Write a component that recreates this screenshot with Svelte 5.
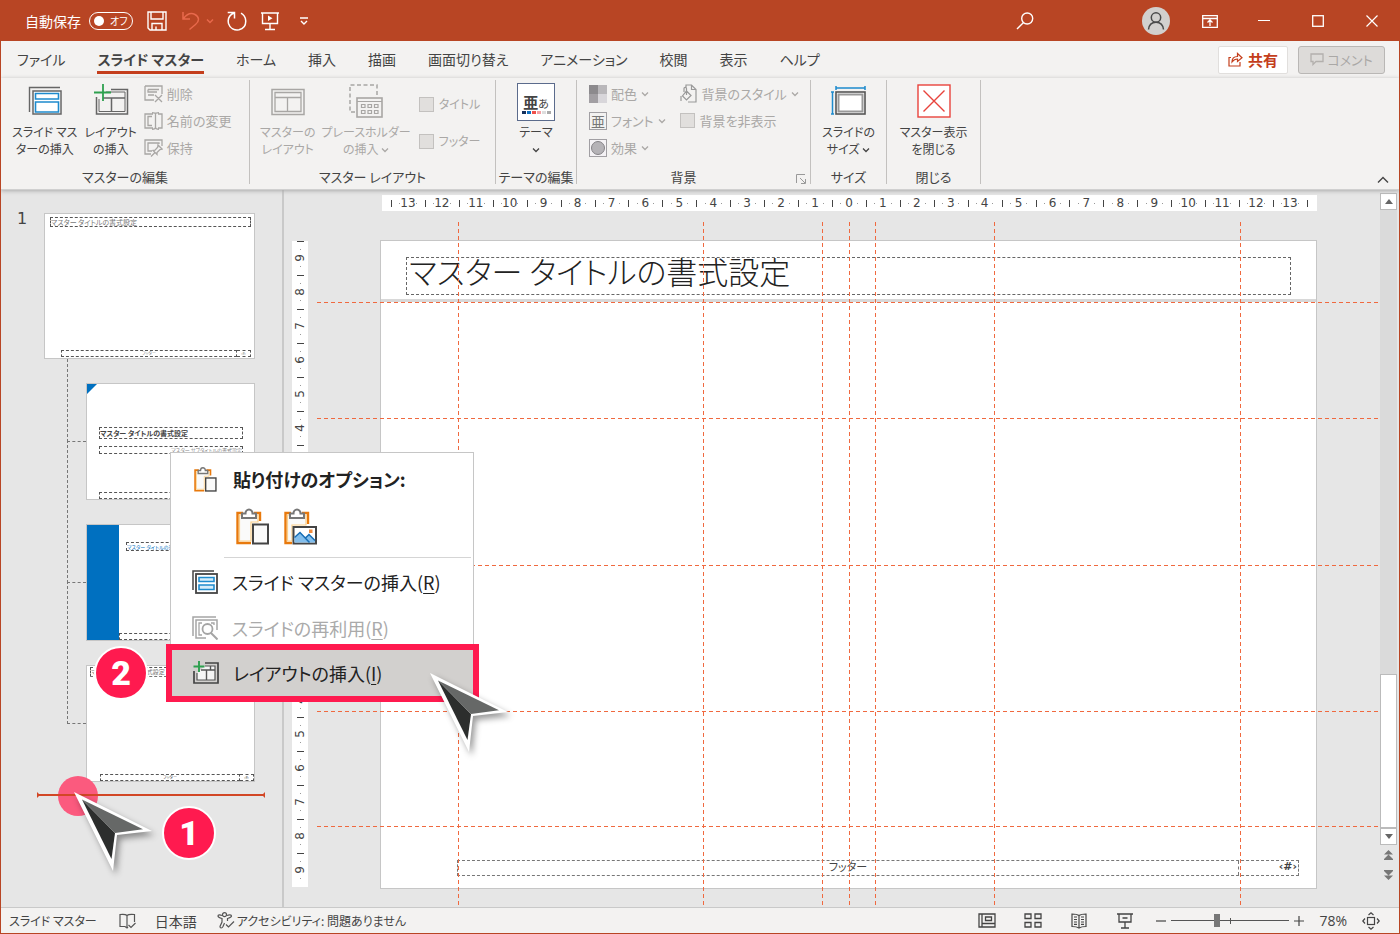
<script>
  const tabs = ['ファイル', 'スライド マスター', 'ホーム', '挿入', '描画', '画面切り替え', 'アニメーション', '校閲', '表示', 'ヘルプ'];
  let activeTab = $state('スライド マスター');
  let zoom = $state(38);

  const hLabels = Array.from({ length: 27 }, (_, i) => Math.abs(i - 13));
  const vLabels = Array.from({ length: 19 }, (_, i) => Math.abs(i - 9));
  const vGuides = [13.3, 36.3, 47.5, 50, 52.5, 63.7, 86.8];
  const hGuides = [11.7, 28.7, 50.2, 71.6, 88.5];
</script>

{#snippet chevron()}
  <svg class="chev" width="8" height="6" viewBox="0 0 8 6"><path d="M1 1.5 4 4.5 7 1.5" fill="none" stroke="currentColor" stroke-width="1.3" /></svg>
{/snippet}

{#snippet clipboard(size)}
  <svg width={size} height={size} viewBox="0 0 36 38">
    <path d="M9 6H3.5V36H17" fill="none" stroke="#e8790c" stroke-width="2.4" />
    <path d="M20 6H26V14" fill="none" stroke="#e8790c" stroke-width="2.4" />
    <path d="M5.500 8H24V15H17V34H5.500Z" fill="#fafafa" stroke="#fbd08a" stroke-width="1.2" />
    <path d="M8 11V6.500H11.500A3.500 4 0 0 1 18.500 6.500H22V11Z" fill="#fff" stroke="#777" stroke-width="2" />
    <rect x="19" y="17.500" width="15" height="19" fill="#fafafa" stroke="#444" stroke-width="2" />
  </svg>
{/snippet}

{#snippet cursor()}
  <svg class="cursor" width="88" height="92" viewBox="0 0 88 92" aria-hidden="true">
    <path d="M0 0 78 39 43 43 39 79Z" fill="#fff" />
    <path d="M8 7.500 37.500 67 41 41Z" fill="#2c2e2d" />
    <path d="M8 7.500 69 37.300 41 41Z" fill="#666867" />
  </svg>
{/snippet}

<div class="window">
  <header class="titlebar">
    <label class="autosave">自動保存
      <button class="toggle" aria-label="自動保存 オフ"><i></i><span>オフ</span></button>
    </label>
    <button class="tb save" aria-label="保存">
      <svg width="20" height="20" viewBox="0 0 20 20" fill="none" stroke="#fff" stroke-width="1.4"><path d="M1 1H19V19H3L1 17ZM4 1V8H16V1M5 19V12.500H15V19M9 19V15.500" /></svg>
    </button>
    <button class="tb undo" aria-label="元に戻す">
      <svg width="18" height="20" viewBox="0 0 18 20" fill="none" stroke="#e8694c" stroke-width="1.5"><path d="M1 1V8H8M1.500 7.500C5 3 9 1.500 13 3.500S18 10 13.500 13.500L7.500 18.500" /></svg>
      <svg width="8" height="6" viewBox="0 0 8 6"><path d="M1 1.500 4 4.500 7 1.500" fill="none" stroke="#e8694c" stroke-width="1.5" /></svg>
    </button>
    <button class="tb redo" aria-label="繰り返し">
      <svg width="20" height="20" viewBox="0 0 20 20" fill="none" stroke="#fff" stroke-width="1.5"><path d="M0.700 1.500H7.500V7.500M7 2C2.500 4 0.500 8 1.500 12.500 3 17.500 7.500 19.500 12 18.800 16.500 17.700 19 14 18.700 9.500 18.400 6 16.500 3.500 14 2.200" /></svg>
    </button>
    <button class="tb show" aria-label="スライドショー">
      <svg width="18" height="20" viewBox="0 0 18 20" fill="none" stroke="#fff" stroke-width="1.4"><path d="M0 2H18M1.500 2V12.500H16.500V2M9 12.500V18.500M4 18.500H14" /><path d="M7 4.500V10L11.500 7.200Z" fill="#fff" stroke="none" /></svg>
    </button>
    <button class="tb" aria-label="カスタマイズ">
      <svg width="10" height="8" viewBox="0 0 10 8" fill="none" stroke="#fff" stroke-width="1.4"><path d="M1 1H9M2 4 5 7 8 4" /></svg>
    </button>
    <span class="grow"></span>
    <button class="tb search" aria-label="検索">
      <svg width="18" height="18" viewBox="0 0 18 18" fill="none" stroke="#fff" stroke-width="1.4"><circle cx="11.200" cy="6.500" r="5.500" /><path d="M7.300 10.700 1 17" /></svg>
    </button>
    <button class="wb" aria-label="アカウント">
      <svg width="28" height="28" viewBox="0 0 28 28"><circle cx="14" cy="14" r="14" fill="#d2d0ce" /><g fill="none" stroke="#4a4a4a" stroke-width="1.5"><circle cx="14" cy="10.500" r="4.700" /><path d="M6.500 22.500C7 17.500 10 15.200 14 15.200S21 17.500 21.500 22.500" /></g></svg>
    </button>
    <button class="wb" aria-label="リボンの表示オプション">
      <svg width="16" height="13" viewBox="0 0 16 13" fill="none" stroke="#fff" stroke-width="1.3"><path d="M0.700 0.700H15.300V12.300H0.700ZM0.700 3.500H15.300M8 11V5M5.500 7.500 8 5 10.500 7.500" /></svg>
    </button>
    <button class="wb" aria-label="最小化"><svg width="12" height="12" viewBox="0 0 12 12"><path d="M0 5.500H12" stroke="#fff" /></svg></button>
    <button class="wb" aria-label="最大化"><svg width="12" height="12" viewBox="0 0 12 12"><rect x="0.700" y="0.700" width="10.600" height="10.600" fill="none" stroke="#fff" stroke-width="1.300" /></svg></button>
    <button class="wb" aria-label="閉じる"><svg width="12" height="12" viewBox="0 0 12 12"><path d="M0.500 0.500 11.500 11.500M11.500 0.500 0.500 11.500" stroke="#fff" stroke-width="1.200" /></svg></button>
  </header>

  <nav class="tabs">
    {#each tabs as t}
      <button class="tab" class:active={t === activeTab} onclick={() => (activeTab = t)}>{t}</button>
    {/each}
    <span class="grow"></span>
    <button class="share">
      <svg width="15" height="15" viewBox="0 0 15 15" fill="none" stroke="#c43e1c" stroke-width="1.200"><path d="M3 5.500H1V14H12V10M4 10C4 6.500 6 4.500 9.500 4.500V1.500L14 5.700 9.500 9.500V7C7 7 5.500 8 4 10Z" /></svg>
      共有
    </button>
    <button class="comment" disabled>
      <svg width="14" height="13" viewBox="0 0 14 13" fill="none" stroke="#b3b0ad" stroke-width="1.300"><path d="M1 1H13V8.500H6L3 11.500V8.500H1Z" /></svg>
      コメント
    </button>
  </nav>

  <div class="ribbon">
    <section class="group g1">
      <div class="body">
        <button class="big">
          <svg width="34" height="34" viewBox="0 0 34 34" fill="none"><path d="M1.500 28V3.500H32" stroke="#666" stroke-width="1.400" /><rect x="5" y="7" width="28" height="23" fill="#fff" stroke="#666" stroke-width="1.500" /><path d="M7.500 9.500H30.500V15H7.500ZM7.500 18H30.500V28H7.500Z" stroke="#1e8bcd" stroke-width="1.600" /></svg>
          <span>スライド マス<br />ターの挿入</span>
        </button>
        <button class="big">
          <svg width="36" height="34" viewBox="0 0 36 34" fill="none"><path d="M18 5.500H34.500V30H3.500V13" stroke="#666" stroke-width="1.500" /><path d="M13 8H32V27.500H6V15" stroke="#666" /><path d="M10 14H32M18.500 14V27.500" stroke="#666" stroke-width="1.500" /><path d="M10 0V17M1 8.500H18" stroke="#2ea04f" stroke-width="1.800" /></svg>
          <span>レイアウト<br />の挿入</span>
        </button>
        <div class="rows">
          <button class="small" disabled>
            <svg width="19" height="18" viewBox="0 0 19 18" fill="none" stroke="#a8a6a4" stroke-width="1.300"><path d="M1 1H18V9M1 1V15H10M4 4.500H15M4 4.500V7H13M4 10H10M11 10 18 17M18 10 11 17" /></svg>
            削除
          </button>
          <button class="small" disabled>
            <svg width="19" height="18" viewBox="0 0 19 18" fill="none" stroke="#a8a6a4" stroke-width="1.300"><path d="M9 2H1V16H9M8 4.500H4V13.500H8M14 2H18V16H14M8 0.700C10 0.700 11.500 1 11.500 2V15.500C11.500 17 10 17.300 8 17.300M15 0.700C13 0.700 11.500 1 11.500 2M15 17.300C13 17.300 11.500 17 11.500 15.500" /></svg>
            名前の変更
          </button>
          <button class="small" disabled>
            <svg width="19" height="18" viewBox="0 0 19 18" fill="none" stroke="#a8a6a4" stroke-width="1.300"><path d="M18 7V1H1V15H7M15 5V4H4V12H8M14 6 18 10 16 10.500 13 13.500 13 15.500 9 11.500 11 11.200 13.700 8.200ZM11 13.500 7 17.500" /></svg>
            保持
          </button>
        </div>
      </div>
      <h2>マスターの編集</h2>
    </section>

    <section class="group g2">
      <div class="body">
        <button class="big" disabled>
          <svg width="34" height="34" viewBox="0 0 34 34" fill="none" stroke="#a8a6a4"><rect x="1" y="5.500" width="32" height="25" stroke-width="1.500" /><path d="M4 8.500H30V27.500H4ZM4 13.500H30M16.500 13.500V27.500" stroke-width="1.300" /></svg>
          <span>マスターの<br />レイアウト</span>
        </button>
        <button class="big" disabled>
          <svg width="34" height="34" viewBox="0 0 34 34" fill="none" stroke="#a8a6a4"><path d="M6 28H1V1H28V11" stroke-width="1.500" stroke-dasharray="4 2.500" /><rect x="8" y="14" width="25" height="19" stroke-width="1.600" fill="#f3f2f1" /><path d="M8 17.500H33M12.500 20.500H16V23.500H12.500ZM19 20.500H22.500V23.500H19ZM25.500 20.500H29V23.500H25.500ZM12.500 26.500H16V29.500H12.500ZM19 26.500H22.500V29.500H19ZM25.500 26.500H29V29.500H25.500Z" stroke-width="1.200" /></svg>
          <span>プレースホルダー<br />の挿入 {@render chevron()}</span>
        </button>
        <div class="checks">
          <label><input type="checkbox" disabled />タイトル</label>
          <label><input type="checkbox" disabled />フッター</label>
        </div>
      </div>
      <h2>マスター レイアウト</h2>
    </section>

    <section class="group g3">
      <div class="body">
        <button class="big">
          <span class="theme"><span class="glyphs"><b>亜</b>あ</span><span class="sw"><i class="c1"></i><i class="c2"></i><i class="c3"></i><i class="c4"></i><i class="c5"></i><i class="c6"></i></span></span>
          <span>テーマ<br />{@render chevron()}</span>
        </button>
      </div>
      <h2>テーマの編集</h2>
    </section>

    <section class="group g4">
      <div class="body">
        <div class="rows">
          <button class="small" disabled>
            <svg width="18" height="18" viewBox="0 0 18 18"><rect width="18" height="18" fill="#8c8a8d" /><rect x="9" width="9" height="9" fill="#b9b7ba" /><rect x="9" y="9" width="9" height="9" fill="#d8d6da" /><rect y="9" width="9" height="9" fill="#a29fa3" /></svg>
            配色 {@render chevron()}
          </button>
          <button class="small" disabled>
            <span class="fonticon">亜</span>フォント {@render chevron()}
          </button>
          <button class="small" disabled>
            <svg width="18" height="18" viewBox="0 0 18 18"><rect x="0.500" y="0.500" width="17" height="17" fill="#f4f2f5" stroke="#a19fa3" /><circle cx="9" cy="9" r="6.500" fill="#b5b3b7" stroke="#858387" /></svg>
            効果 {@render chevron()}
          </button>
        </div>
        <div class="rows">
          <button class="small" disabled>
            <svg width="18" height="20" viewBox="0 0 18 20" fill="none" stroke="#999" stroke-width="1.200"><path d="M6 4V1H11.500L16 5.500V18H8M11.500 1V5.500H16M6.500 7 11 11.500 6.500 16 2.500 12ZM6.500 11V4.500C6.500 3 4 3 4 4.500V8M1 12V17" /></svg>
            背景のスタイル {@render chevron()}
          </button>
          <label class="small"><input type="checkbox" disabled />背景を非表示</label>
        </div>
      </div>
      <h2>背景</h2>
      <button class="launcher" aria-label="背景の書式設定"><svg width="10" height="10" viewBox="0 0 10 10" fill="none" stroke="#999"><path d="M0.500 9V0.500H9M4 4 9 9M9.500 5V9.500H5" /></svg></button>
    </section>

    <section class="group g5">
      <div class="body">
        <button class="big">
          <svg width="36" height="34" viewBox="0 0 36 34" fill="none"><path d="M5 4H34M5 2V6M34 2V6M1.500 8V30M0 8H3M0 30H3" stroke="#1e8bcd" stroke-width="1.500" /><rect x="5" y="8" width="29" height="22" fill="#fff" stroke="#555" stroke-width="1.600" /><rect x="7.500" y="10.500" width="24" height="17" stroke="#999" stroke-width="2" /></svg>
          <span>スライドの<br />サイズ {@render chevron()}</span>
        </button>
      </div>
      <h2>サイズ</h2>
    </section>

    <section class="group g6">
      <div class="body">
        <button class="big">
          <svg width="34" height="34" viewBox="0 0 34 34" fill="none" stroke="#e8433c"><rect x="1" y="1" width="32" height="32" fill="#fff" stroke-width="1.400" /><path d="M6.500 6.500 27.500 27.500M27.500 6.500 6.500 27.500" stroke-width="1.400" /></svg>
          <span>マスター表示<br />を閉じる</span>
        </button>
      </div>
      <h2>閉じる</h2>
    </section>
    <span class="grow"></span>
    <button class="collapse" aria-label="リボンを折りたたむ"><svg width="12" height="8" viewBox="0 0 12 8"><path d="M1 6.500 6 1.500 11 6.500" fill="none" stroke="#444" stroke-width="1.400" /></svg></button>
  </div>

  <main class="work">
    <aside class="side">
      <div class="master">
        <span class="num">1</span>
        <div class="thumb">
          <span class="ph mtitle">マスター タイトルの書式設定</span>
          <span class="foot"><span class="ph">フッター</span><span class="ph r">‹#›</span></span>
        </div>
      </div>
      <ul class="layouts">
        <li class="thumb cover">
          <span class="ph t">マスター タイトルの書式設定</span>
          <span class="ph s">マスター サブタイトルの書式設定</span>
          <span class="foot"><span class="ph"></span></span>
        </li>
        <li class="thumb section">
          <span class="ph t">マスター タイトルの書式設定</span>
          <span class="foot"><span class="ph"></span></span>
        </li>
        <li class="thumb plain">
          <span class="ph t">マスター タイトルの書式設定</span>
          <span class="foot"><span class="ph">フッター</span><span class="ph r">‹#›</span></span>
        </li>
      </ul>
      <div class="insert">
        <span class="spot"></span>
        <span class="line"></span>
        {@render cursor()}
        <span class="badge one">1</span>
      </div>
    </aside>

    <div class="editor">
      <div class="ruler h">
        {#each hLabels as n}<span>{n}</span>{/each}<i></i>
      </div>
      <div class="ruler v">
        {#each vLabels as n}<span><em>{n}</em></span>{/each}
      </div>
      <div class="stage">
        <article class="slide">
          <h1>マスター タイトルの書式設定</h1>
          <hr />
          <footer><span>フッター</span><b>‹#›</b></footer>
        </article>
        {#each vGuides as g}<i class="guide gv" style="left: {g}%"></i>{/each}
        {#each hGuides as g}<i class="guide gh" style="top: {g}%"></i>{/each}
      </div>
      <div class="scroll">
        <button aria-label="上へ"><svg width="8" height="5" viewBox="0 0 8 5"><path d="M0 5 4 0 8 5Z" fill="#666" /></svg></button>
        <div class="track"><div class="thumbbar"></div></div>
        <button aria-label="下へ"><svg width="8" height="5" viewBox="0 0 8 5"><path d="M0 0H8L4 5Z" fill="#666" /></svg></button>
        <button class="page" aria-label="前のスライド"><svg width="9" height="10" viewBox="0 0 9 10" fill="#777"><path d="M0 4.500 4.500 0 9 4.500ZM0 9 4.500 4.500 9 9V10H0Z" /></svg></button>
        <button class="page" aria-label="次のスライド"><svg width="9" height="10" viewBox="0 0 9 10" fill="#777"><path d="M0 5.500 4.500 10 9 5.500ZM0 1 4.500 5.500 9 1V0H0Z" /></svg></button>
      </div>
    </div>
  </main>

  <footer class="status">
    <span>スライド マスター</span>
    <button class="book" aria-label="スペルチェック"><svg width="17" height="16" viewBox="0 0 17 16" fill="none" stroke="#555" stroke-width="1.200"><path d="M8 14V2.500C7 1.500 5 1 1 1.500V13.500H6L8 15 9 14M8 2.500C9 1.500 11 1 15.500 1.500V9M9.500 12 12 14.500 16.500 10" /></svg></button>
    <button class="lang">日本語</button>
    <button class="acc">
      <svg width="18" height="17" viewBox="0 0 18 17" fill="none" stroke="#555" stroke-width="1.200"><circle cx="7.500" cy="2.700" r="2" /><path d="M5 3.500C3 2.500 1 2.500 1 4S3 6 5 6.500V10L3 14.500C3 16.500 5 16.500 6 14.500L7.500 11M10 3.500C12 2.500 14.500 2.500 14.500 4S12 6 10.500 6.500V9M9 12.500 11.500 15 17 9.500" /></svg>
      アクセシビリティ: 問題ありません
    </button>
    <span class="grow"></span>
    <button class="view" aria-label="標準"><svg width="18" height="15" viewBox="0 0 18 15" fill="none" stroke="#444" stroke-width="1.300"><path d="M1 1H17V14H1ZM4 1V14M4 10.500H17M7.500 4H13.500V7.500H7.500Z" /></svg></button>
    <button class="view" aria-label="スライド一覧"><svg width="18" height="15" viewBox="0 0 18 15" fill="none" stroke="#444" stroke-width="1.300"><path d="M1 1H7V5.500H1ZM11 1H17V5.500H11ZM1 9.500H7V14H1ZM11 9.500H17V14H11Z" /></svg></button>
    <button class="view" aria-label="閲覧表示"><svg width="16" height="16" viewBox="0 0 16 16" fill="none" stroke="#444" stroke-width="1.200"><path d="M8 2.500C6 1 3 1 1 1V13.500C4 13.500 6 13.700 8 15 10 13.700 12 13.500 15 13.500V1C13 1 10 1 8 2.500V15M3 4H6M3 6.500H6M3 9H6M3 11.300H6M10 4H13M10 6.500H13M10 9H13M10 11.300H13" /></svg></button>
    <button class="view" aria-label="スライドショー"><svg width="16" height="16" viewBox="0 0 16 16" fill="none" stroke="#444" stroke-width="1.300"><path d="M0 1H16M2 1V9H14V1M8 9V15M4 15H12M5.500 5H10.500" /></svg></button>
    <button class="zb" aria-label="縮小"><svg width="10" height="10" viewBox="0 0 10 10"><path d="M0 5H10" stroke="#444" stroke-width="1.200" /></svg></button>
    <input class="zoom" type="range" min="0" max="100" bind:value={zoom} aria-label="ズーム" />
    <button class="zb" aria-label="拡大"><svg width="10" height="10" viewBox="0 0 10 10"><path d="M0 5H10M5 0V10" stroke="#444" stroke-width="1.200" /></svg></button>
    <button class="pct">78%</button>
    <button class="fit" aria-label="ウィンドウに合わせる"><svg width="18" height="18" viewBox="0 0 18 18" fill="none" stroke="#444" stroke-width="1.200"><rect x="5.500" y="5.500" width="7" height="7" /><path d="M6.500 3 9 0.800 11.500 3M6.500 15 9 17.200 11.500 15M3 6.500 0.800 9 3 11.500M15 6.500 17.200 9 15 11.500" /></svg></button>
  </footer>

  <div class="menu" role="menu">
    <div class="mi head">{@render clipboard(26)}<strong>貼り付けのオプション:</strong></div>
    <div class="paste">
      <button aria-label="貼り付け">{@render clipboard(38)}</button>
      <button aria-label="図">
        <svg width="38" height="38" viewBox="0 0 36 38">
          <path d="M9 6H3.500V36H10M20 6H26V17" fill="none" stroke="#e8790c" stroke-width="2.400" />
          <path d="M5.500 8H24V18H10V34H5.500Z" fill="#fafafa" stroke="#fbd08a" stroke-width="1.200" />
          <path d="M8 11V6.500H11.500A3.500 4 0 0 1 18.500 6.500H22V11Z" fill="#fff" stroke="#777" stroke-width="2" />
          <rect x="11.500" y="20" width="22.500" height="16.500" fill="#fff" stroke="#444" stroke-width="2" />
          <path d="M12.500 33V30L18 25 23 30 27 27.500 33 33V35.500H12.500Z" fill="#83beec" /><path d="M12.500 30.500 18 25.500 27.500 35.500M23.500 31 27 27.500 33 33.500" fill="none" stroke="#1a6fb5" stroke-width="1.500" />
          <rect x="27" y="22.500" width="3.500" height="3.500" fill="#f08a3c" />
        </svg>
      </button>
    </div>
    <button class="mi" role="menuitem">
      <svg width="26" height="24" viewBox="0 0 26 24" fill="none"><path d="M1 20V1H22" stroke="#444" stroke-width="1.500" /><rect x="4" y="4" width="21" height="19" fill="#fff" stroke="#444" stroke-width="1.800" /><path d="M7 7.500H22V11.500H7ZM7 15H22V19.500H7Z" fill="#d5ecfa" stroke="#1e8bcd" stroke-width="1.600" /></svg>
      <span>スライド マスターの挿入(<u>R</u>)</span>
    </button>
    <button class="mi" role="menuitem" disabled>
      <svg width="26" height="24" viewBox="0 0 26 24" fill="none" stroke="#a5a5a5"><path d="M1 20V1H24M14 22H4V4H25V14" stroke-width="1.500" /><path d="M10 7H7V19H10M19 7H22V9" stroke-width="1.300" /><circle cx="15.500" cy="13" r="5" stroke-width="1.800" /><path d="M19 17 25.500 23.500" stroke-width="2" /></svg>
      <span>スライドの再利用(<u>R</u>)</span>
    </button>
    <button class="mi hot" role="menuitem">
      <svg width="26" height="24" viewBox="0 0 26 24" fill="none"><path d="M12 2H25V22H1V10" stroke="#444" stroke-width="1.700" /><path d="M12 5H22V19H4V12" fill="#f5f5f5" stroke="#555" stroke-width="1.200" /><path d="M8 9H22M13.500 9V19M17.500 5V9" stroke="#555" stroke-width="1.400" /><path d="M6 0V11M0.500 5.500H11.500" stroke="#2ea04f" stroke-width="1.900" /></svg>
      <span>レイアウトの挿入(<u>I</u>)</span>
    </button>
    {@render cursor()}
    <span class="badge two">2</span>
  </div>
</div>

<style>
  :global(body) { margin: 0; }
  .window, .window * { box-sizing: border-box; }
  .window {
    position: relative; display: flex; flex-direction: column; height: 100vh; overflow: hidden;
    border: 1px solid #b84524; background: #e6e6e6; color: #444;
    font: 14px/18px "Noto Sans CJK JP", sans-serif; font-feature-settings: "palt";
  }
  button { border: 0; background: none; padding: 0; margin: 0; font: inherit; font-feature-settings: inherit; color: inherit; white-space: nowrap; }
  svg { display: block; flex: none; }
  h1, h2, ul, hr { margin: 0; padding: 0; font: inherit; list-style: none; }
  .grow { flex: 1; }
  .chev { display: inline-block; vertical-align: 1px; }

  .titlebar { display: flex; align-items: center; flex: none; height: 40px; padding-left: 24px; background: #b84524; color: #fff; }
  .autosave { display: flex; align-items: center; gap: 8px; margin-right: 14px; line-height: 16px; }
  .toggle { display: flex; align-items: center; gap: 6px; width: 44px; height: 18px; padding: 0 4px; border: 1px solid #fff; border-radius: 9px; font-size: 10px; line-height: 16px; }
  .toggle i { flex: none; width: 10px; height: 10px; border-radius: 5px; background: #fff; }
  .tb { display: flex; align-items: center; gap: 6px; margin-right: 16px; }
  .save { margin-right: 15px; }
  .redo { margin-right: 14px; }
  .undo { margin-right: 13px; }
  .show { margin-right: 20px; }
  .search { margin-right: 95px; }
  .wb { display: flex; align-items: center; justify-content: center; width: 54px; height: 40px; }

  .tabs { display: flex; align-items: center; flex: none; height: 37px; gap: 32px; padding: 0 14px 0 16px; background: #f3f2f1; }
  .tab { height: 28px; border-bottom: 3px solid transparent; line-height: 26px; }
  .tab.active { border-color: #c43e1c; font-weight: 700; }
  .share, .comment { display: flex; align-items: center; justify-content: center; gap: 5px; height: 28px; border: 1px solid #e1dfdd; border-radius: 2px; background: #fff; line-height: 20px; }
  .share { width: 70px; margin-right: -22px; color: #c43e1c; font-size: 15px; font-weight: 700; }
  .comment { width: 87px; gap: 3px; border-color: #b9b7b5; border-radius: 3px; background: #dddbd9; color: #aaa8a6; font-size: 13px; }

  .ribbon { position: relative; z-index: 1; display: flex; flex: none; height: 112px; padding: 2px 0 5px; background: #f3f2f1; border-bottom: 1px solid #d0d0d0; box-shadow: 0 1px 4px #aaa; font-size: 13px; }
  .group { position: relative; display: flex; flex-direction: column; justify-content: space-between; flex: none; border-right: 1px solid #c3c1bf; }
  .group h2 { text-align: center; line-height: 14px; white-space: nowrap; }
  .group h2 { font-size: 13px; }
  .body { display: flex; justify-content: center; }
  .g1 { width: 249px; }
  .g1 .body { justify-content: flex-start; padding-left: 11px; gap: 7px; }
  .g2 { width: 246px; }
  .g2 .body { justify-content: flex-start; padding-left: 10px; gap: 6px; }
  .g3 { width: 81px; }
  .g4 { width: 234px; }
  .g4 h2 { padding-right: 20px; }
  .g4 .body { justify-content: flex-start; padding-left: 12px; gap: 14px; }
  .g5 { width: 76px; }
  .g6 { width: 94px; }
  .big { display: flex; flex-direction: column; align-items: center; height: 80px; padding-top: 4px; gap: 5px; font-size: 12px; line-height: 17px; }
  .big:disabled, .small { color: #aaa8a6; }
  .rows { display: flex; flex-direction: column; }
  .small { display: flex; align-items: center; gap: 4px; height: 27px; }
  input[type="checkbox"] { appearance: none; flex: none; width: 15px; height: 15px; margin: 0; border: 1px solid #c3c1bf; background: #e1dfdd; }
  .checks { display: flex; flex-direction: column; gap: 19px; padding: 15px 0 0 2px; color: #aaa8a6; font-size: 12px; white-space: nowrap; }
  .checks label, label.small { display: flex; align-items: center; gap: 5px; }
  .theme { display: flex; flex-direction: column; align-items: center; justify-content: flex-end; width: 38px; height: 38px; margin-top: -1px; margin-bottom: -3px; padding-bottom: 6px; border: 1px solid #5b6b8c; background: #fff; }
  .glyphs { font-size: 11px; line-height: 15px; }
  .glyphs b { font-size: 15px; }
  .sw { display: flex; gap: 1px; }
  .sw i { width: 4px; height: 3px; }
  .c1 { background: #14305c; } .c2 { background: #0f70c0; } .c3 { background: #f0504a; } .c4 { background: #f5a0a4; } .c5 { background: #ddd; } .c6 { background: #aaa; }
  .fonticon { width: 18px; height: 18px; border: 1px solid #a19fa3; color: #777; text-align: center; font-size: 14px; line-height: 16px; }
  .launcher { position: absolute; right: 4px; bottom: 0; }
  .collapse { align-self: flex-end; margin-right: 10px; }

  .work { display: flex; flex: 1; min-height: 0; }
  .side { flex: none; width: 283px; padding: 23px 27px 0 16px; border-right: 2px solid #c9c9c9; }
  .master { display: flex; }
  .num { width: 27px; font: 18px/12px "DejaVu Sans", sans-serif; font-size: 16px; }
  .thumb { position: relative; display: flex; flex-direction: column; height: 117px; border: 1px solid #c6c6c6; background: #fff; font-size: 5px; line-height: 6px; }
  .master .thumb { flex: 1; height: 146px; padding: 3px 3px 1px 5px; font-size: 7px; line-height: 8px; color: #777; }
  .ph { border: 1px dashed #555; white-space: nowrap; overflow: hidden; }
  .mtitle { height: 10px; }
  .foot { display: flex; height: 7px; margin-top: auto; font-size: 4px; line-height: 5px; text-align: center; }
  .foot .ph { flex: 1; }
  .foot .ph.r { flex: none; width: 14px; border-left: 0; }
  .master .foot { margin-left: 11px; }
  .layouts { display: flex; flex-direction: column; gap: 24px; margin: 24px 0 0 69px; }
  .layouts li::before { content: ""; position: absolute; left: -20px; top: -85px; width: 18px; height: 142px; border: 1px dashed #777; border-width: 0 0 1px 1px; }
  .layouts li.cover::before { top: -25px; height: 82px; }
  .cover::after { content: ""; position: absolute; left: 0; top: 0; border: 5px solid #0070c0; border-right-color: transparent; border-bottom-color: transparent; }
  .cover { padding: 43px 11px 0 12px; }
  .cover .t { height: 12px; font-size: 7px; font-weight: 700; line-height: 10px; }
  .cover .s { height: 8px; margin-top: 7px; text-align: right; color: #888; }
  .section { padding: 17px 11px 0 39px; }
  .section::after { content: ""; position: absolute; left: 0; top: 0; bottom: 0; width: 32px; background: #0070c0; }
  .section .t { height: 9px; color: #0070c0; line-height: 7px; }
  .section .foot { margin-left: -7px; }
  .plain { padding: 1px 0 0 3px; }
  .plain .t { height: 10px; margin-right: 3px; font-size: 6px; line-height: 8px; color: #777; border-bottom-color: #777; }
  .plain .foot { margin-left: 10px; }

  .insert { position: relative; z-index: 2; height: 12px; margin: 7px -10px 0 19px; }
  .line { position: absolute; inset: 5px 0 auto 1px; height: 2px; background: #d24726; }
  .line::before, .line::after { content: ""; position: absolute; top: -2px; border: 3px solid transparent; }
  .line::before { left: 0; border-left-color: #d24726; border-right: 0; }
  .line::after { right: 0; border-right-color: #d24726; border-left: 0; }
  .spot { position: absolute; left: 22px; top: -13px; width: 40px; height: 40px; border-radius: 50%; background: #fb5a7e; }
  .cursor { position: absolute; filter: drop-shadow(3px 4px 3px #0006); overflow: visible; }
  .insert .cursor { left: 38px; top: 3px; }
  .badge { position: absolute; width: 54px; height: 54px; border: 2px solid #fff; border-radius: 50%; background: #ff1a4f; color: #fff; text-align: center; font: 900 34px/50px Roboto, sans-serif; }
  .one { left: 126px; top: 17px; }

  .editor { display: grid; flex: 1; grid-template: 16px 1fr / 16px 1fr 18px; row-gap: 11px; min-width: 0; padding: 5px 1px 2px 8px; }
  .ruler { display: flex; background: #fff; font: 12px/16px "DejaVu Sans", sans-serif; }
  .ruler span { flex: 1; display: flex; align-items: center; justify-content: center; min-width: 0; min-height: 0; }
  .ruler.h { grid-area: 1 / 2; margin: 0 63px 0 74px; padding: 0 9px; align-items: center; }
  .ruler.h span { background: linear-gradient(#444 0 0) 0 50% / 1px 7px no-repeat, linear-gradient(#999 0 0) 25% 50% / 1px 1px no-repeat, linear-gradient(#999 0 0) 75% 50% / 1px 1px no-repeat; }
  .ruler.h i { width: 1px; height: 7px; background: #444; }
  .ruler.v { grid-area: 2 / 1; flex-direction: column; margin: 19px 0 18px; }
  .ruler.v span { background: linear-gradient(#444 0 0) 50% 0 / 7px 1px no-repeat, linear-gradient(#999 0 0) 50% 25% / 1px 1px no-repeat, linear-gradient(#999 0 0) 50% 75% / 1px 1px no-repeat; }
  .ruler em { font-style: normal; rotate: -90deg; }
  .stage { grid-area: 2 / 2; position: relative; display: flex; margin-left: 9px; padding: 18px 63px 16px; }
  .slide { flex: 1; display: flex; flex-direction: column; border: 1px solid #c6c6c6; background: #fff; }
  .slide h1 { height: 38px; margin: 16px 25px 0; padding-left: 2px; border: 1px dashed #666; font-size: 31px; font-weight: 300; line-height: 26px; color: #222; white-space: nowrap; }
  .slide hr { height: 3px; margin-top: 4px; border: 0; background: #d8d8d8; }
  .slide footer { display: flex; height: 16px; margin: auto 17px 12px 76px; border: 1px dashed #777; font-size: 11px; line-height: 10px; text-align: center; }
  .slide footer span { flex: 1; }
  .slide footer b { width: 60px; padding: 1px 1px 0; border-left: 1px dashed #777; text-align: right; font-family: "DejaVu Sans", sans-serif; }
  .guide { position: absolute; }
  .gv { top: 0; bottom: 0; width: 1px; background: repeating-linear-gradient(#f0693f 0 4px, transparent 4px 7px); }
  .gh { left: 0; right: 0; height: 1px; background: repeating-linear-gradient(90deg, #f0693f 0 4px, transparent 4px 7px); }
  .scroll { grid-area: 1 / 3 / 3 / 4; display: flex; flex-direction: column; margin: -2px 1px 20px 0; }
  .scroll button { display: flex; align-items: center; justify-content: center; height: 17px; border: 1px solid #bbb; background: #fff; }
  .scroll .page { height: 20px; border: 0; background: none; }
  .track { flex: 1; display: flex; flex-direction: column; justify-content: flex-end; background: #dadada; }
  .thumbbar { height: 25%; border: 1px solid #bbb; background: #fff; }

  .status { display: flex; align-items: center; flex: none; height: 26px; padding: 0 19px 0 8px; background: #f3f2f1; border-top: 1px solid #c9c9c9; font-size: 12px; }
  .book { margin: 0 19px 0 22px; }
  .lang { margin-right: 20px; font-size: 14px; }
  .acc { display: flex; align-items: center; gap: 2px; }
  .view { display: flex; justify-content: center; width: 18px; margin-right: 28px; }
  .view + .zb { margin-left: -6px; }
  .zb { margin: 0 5px; }
  .zoom { appearance: none; width: 118px; height: 15px; margin: 0; background: linear-gradient(#555 0 0) 50% 50% / 1px 6px no-repeat, linear-gradient(#555 0 0) 0 50% / 100% 1px no-repeat; }
  .zoom::-webkit-slider-thumb { appearance: none; width: 6px; height: 13px; background: #777; }
  .pct { margin: 0 15px 0 10px; font-family: "Open Sans", sans-serif; font-size: 14px; }

  .menu { position: absolute; z-index: 5; left: 169px; top: 451px; display: flex; flex-direction: column; width: 304px; border: 1px solid #c6c6c6; background: #fff; color: #222; font-size: 18px; line-height: 26px; }
  .mi { display: flex; align-items: center; gap: 14px; height: 45px; padding-left: 21px; text-align: left; }
  .mi:disabled { color: #aaa; }
  .mi.head { height: 52px; gap: 15px; }
  .mi u { text-underline-offset: 3px; text-decoration-thickness: 1px; }
  .paste { display: flex; gap: 10px; margin: 0 2px 0 53px; padding: 2px 0 12px 9px; border-bottom: 1px solid #d5d5d5; }
  .paste + .mi { height: 47px; }
  .mi.hot { height: 58px; margin: -6px -6px -6px -5px; border: 6px solid #ff1a4f; background: #d2d0ce; }
  .menu .cursor { left: 259px; top: 220px; }
  .two { left: -77px; top: 193px; }
</style>
